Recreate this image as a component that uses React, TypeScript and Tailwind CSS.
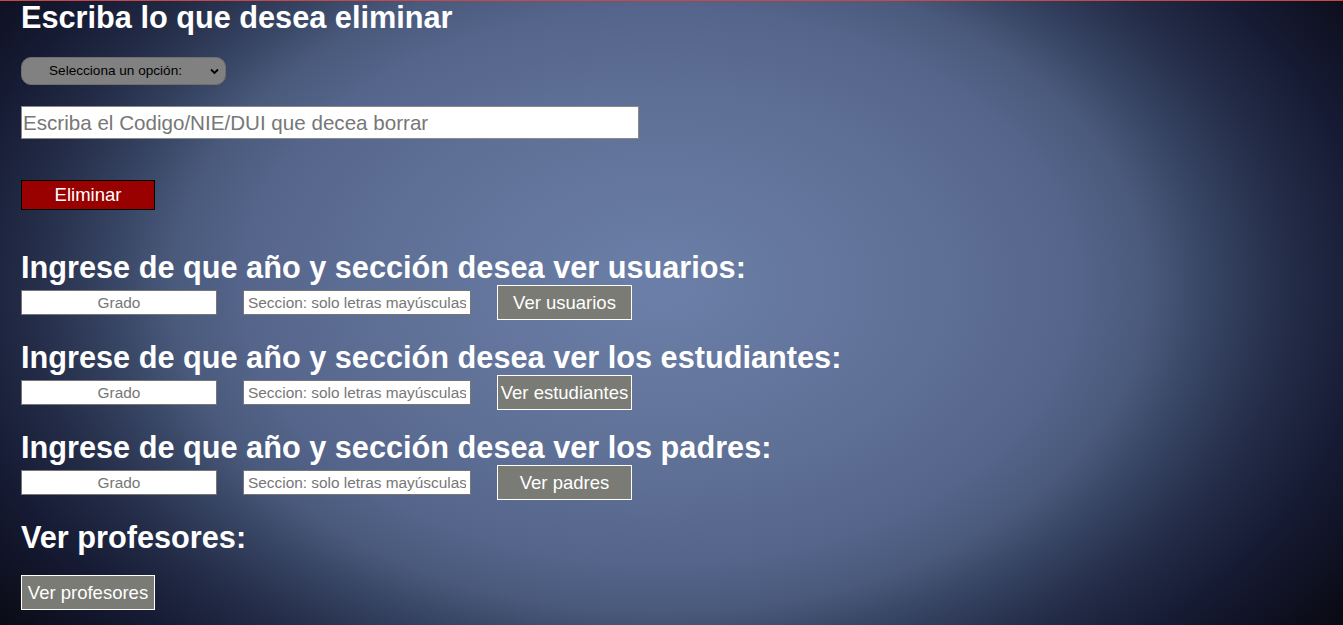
import { useState } from 'react'

const sections = [
  { title: 'Ingrese de que año y sección desea ver usuarios:', button: 'Ver usuarios' },
  { title: 'Ingrese de que año y sección desea ver los estudiantes:', button: 'Ver estudiantes' },
  { title: 'Ingrese de que año y sección desea ver los padres:', button: 'Ver padres' },
]

export default function App() {
  const [option, setOption] = useState('')
  const [code, setCode] = useState('')

  return (
    <div className="min-h-screen h-[625px] overflow-hidden border-t border-[#c84848] bg-[radial-gradient(ellipse_840px_560px_at_660px_285px,#6b7fa8_0%,#5f7096_33%,#54648a_50%,#4a5a7c_58%,#33405e_67%,#222a45_76%,#161b34_85%,#0a0a14_100%)] px-[21px] font-['Liberation_Sans',Arial,sans-serif] text-white">
      <h1 className="text-[30.7px] font-bold leading-[34px]">Escriba lo que desea eliminar</h1>

      <div className="relative mt-[22px] w-[205px]">
        <select
          value={option}
          onChange={e => setOption(e.target.value)}
          className="h-[28px] w-full appearance-none rounded-[10px] border border-[#6f6f6f] bg-[#818181] pl-[27px] pr-6 text-[13.6px] text-black"
        >
          <option value="">Selecciona un opción:</option>
          <option value="alumno">Alumno</option>
          <option value="padre">Padre</option>
          <option value="profesor">Profesor</option>
        </select>
        <svg className="pointer-events-none absolute right-[7px] top-[11px]" width="9" height="7" viewBox="0 0 9 7">
          <path d="M1 1.5 L4.5 5 L8 1.5" fill="none" stroke="#000" strokeWidth="1.8" />
        </svg>
      </div>

      <input
        value={code}
        onChange={e => setCode(e.target.value)}
        placeholder="Escriba el Codigo/NIE/DUI que decea borrar"
        className="mt-[21px] block h-[33px] w-[618px] border border-[#8a8a8a] bg-white px-[1px] text-[20.6px] text-black placeholder:text-[#777]"
      />

      <button className="mt-[41px] block h-[30px] w-[134px] border border-black bg-[#990000] text-[18.5px] text-white">
        Eliminar
      </button>

      <div className="mt-[40px] flex flex-col gap-[20px]">
        {sections.map(s => (
          <div key={s.button}>
            <h2 className="text-[30.7px] font-bold leading-[35px]">{s.title}</h2>
            <div className="flex items-center">
              <input
                placeholder="Grado"
                className="h-[25px] w-[196px] border border-[#767676] bg-white text-center text-[15.4px] text-black placeholder:text-[#777]"
              />
              <input
                placeholder="Seccion: solo letras mayúsculas"
                className="ml-[26px] h-[25px] w-[228px] border border-[#767676] bg-white px-[4px] text-[15.4px] text-black placeholder:text-[#777]"
              />
              <button className="ml-[26px] h-[35px] w-[135px] border border-white bg-[#7a7b74] text-[18.5px] text-white">
                {s.button}
              </button>
            </div>
          </div>
        ))}
        <h2 className="text-[30.7px] font-bold leading-[35px]">Ver profesores:</h2>
      </div>

      <button className="mt-[20px] block h-[35px] w-[134px] border border-white bg-[#7a7b74] text-[18.5px] text-white">
        Ver profesores
      </button>
    </div>
  )
}
